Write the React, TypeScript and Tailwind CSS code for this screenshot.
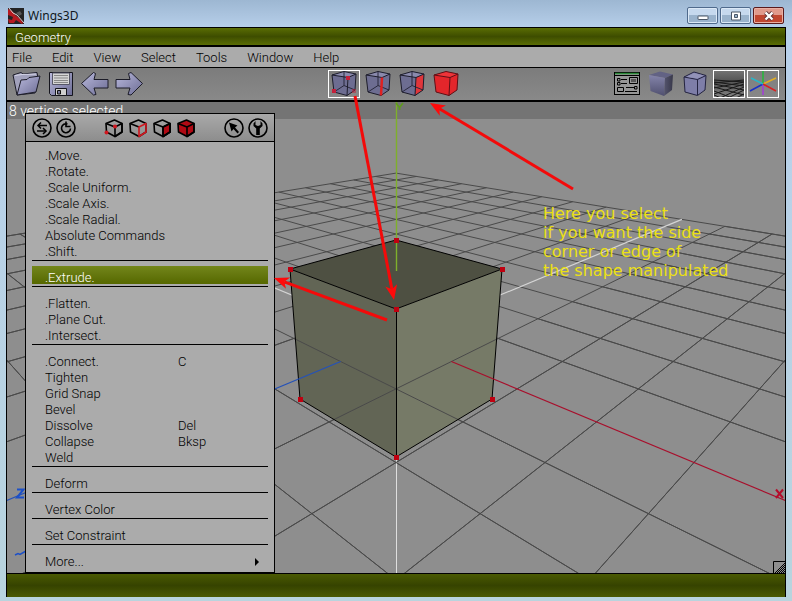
import React from "react";

type Point = [number, number];

/* Perspective projection of the ground plane. The origin sits inside the cube. */
const DEPTH = 12.717;
const project = (i: number, j: number): Point => {
  const w = DEPTH - i - j;
  return [396 + (649.4 * (i - j)) / w, 68 + 3439 / w];
};

type GridSegment = { key: string; from: Point; to: Point };

const segment = (key: string, i1: number, j1: number, i2: number, j2: number): GridSegment => ({
  key,
  from: project(i1, j1),
  to: project(i2, j2),
});

const steps = Array.from({ length: 21 }, (_, n) => n - 10);

const backGrid: GridSegment[] = steps
  .filter((n) => n !== 0)
  .flatMap((n) => {
    const end = Math.min(10, 11 - n);
    return [segment(`a${n}`, n, -10, n, end), segment(`b${n}`, -10, n, end, n)];
  });

/* The part of the ground that lies in front of the cube. */
const frontGrid: GridSegment[] = steps
  .filter((n) => n !== 0)
  .flatMap((n) => {
    const end = Math.min(10, 11 - n);
    const start = n > 1 ? -10 : n === 1 ? -1 : 1;
    return [segment(`c${n}`, n, start, n, end), segment(`d${n}`, start, n, end, n)];
  });

function Segments({ items, stroke }: { items: GridSegment[]; stroke: string }) {
  return (
    <g stroke={stroke} strokeWidth="1">
      {items.map((s) => (
        <line key={s.key} x1={s.from[0]} y1={s.from[1]} x2={s.to[0]} y2={s.to[1]} />
      ))}
    </g>
  );
}

function Axis({ from, to, stroke }: { from: Point; to: Point; stroke: string }) {
  return <line x1={from[0]} y1={from[1]} x2={to[0]} y2={to[1]} stroke={stroke} strokeWidth="1.2" />;
}

const selectedVertices: Point[] = [
  [396, 240], [502, 269], [396, 309], [290, 269], [492, 399], [396, 457], [300, 399],
];

function Scene() {
  return (
    <svg
      className="absolute inset-0 size-full"
      viewBox="7 102 778 471"
      preserveAspectRatio="xMidYMid slice"
      aria-label="3D view of a cube"
    >
      <Segments items={backGrid} stroke="#4a4a4a" />
      <Axis from={project(0, 0)} to={project(0, -10)} stroke="#d4d4d4" />
      <Axis from={project(0, 0)} to={project(-10, 0)} stroke="#d4d4d4" />
      <line x1="396.5" y1="460" x2="396.5" y2="573" stroke="#dedede" />
      <polygon points="396,240 502,269 396,309 290,269" fill="#4e5042" />
      <polygon points="290,269 396,309 396,457 300,399" fill="#626555" />
      <polygon points="502,269 396,309 396,457 492,399" fill="#767a67" />
      <Segments items={frontGrid} stroke="#4a4a4a" />
      <g fill="none" stroke="#000" strokeWidth="1">
        <path d="M396 240L502 269L396 309L290 269ZM290 269L300 399L396 457L492 399L502 269M396.5 309V457" />
      </g>
      <Axis from={project(1, 0)} to={project(8, 0)} stroke="#a80f2c" />
      <Axis from={project(0, 1)} to={project(0, 8)} stroke="#2552b8" />
      <line x1="396.5" y1="102" x2="396.5" y2="271" stroke="#7fb02c" strokeWidth="1.4" />
      {selectedVertices.map(([x, y]) => (
        <rect key={`${x}-${y}`} x={x - 2} y={y - 2} width="5" height="5" fill="#c00010" />
      ))}
      <path d="M396 103L399.500 107.500L403 103M399.500 107V110" fill="none" stroke="#5f9a20" strokeWidth="1.800" />
      <path d="M776 489.500L783 498M783 489.500L776 498" stroke="#b50d2c" strokeWidth="2" />
      <path d="M17 489.500H23.500L17 497.500H24" fill="none" stroke="#1c50c8" strokeWidth="2" />
      <path d="M15 555L18 553.500L20 554.500L26 551" fill="none" stroke="#1c50c8" strokeWidth="1.500" />
    </svg>
  );
}

function Arrow({ from, to }: { from: Point; to: Point }) {
  const angle = Math.atan2(to[1] - from[1], to[0] - from[0]);
  const at = (along: number, across: number): Point => [
    to[0] - along * Math.cos(angle) - across * Math.sin(angle),
    to[1] - along * Math.sin(angle) + across * Math.cos(angle),
  ];
  const neck = at(11, 0);
  return (
    <g>
      <line x1={from[0]} y1={from[1]} x2={neck[0]} y2={neck[1]} stroke="#f40a0a" strokeWidth="3" />
      <polygon points={[to, at(15, 6), neck, at(15, -6)].map((p) => p.join(",")).join(" ")} fill="#ff0a0a" />
    </g>
  );
}

function Annotations() {
  return (
    <>
      <svg
        className="pointer-events-none absolute inset-0 z-20 size-full overflow-visible"
        viewBox="7 102 778 471"
        preserveAspectRatio="xMidYMid slice"
        aria-hidden="true"
      >
        <Arrow from={[355, 96]} to={[394, 300]} />
        <Arrow from={[387, 320]} to={[274, 278]} />
        <Arrow from={[573, 189]} to={[430, 103]} />
      </svg>
      <p className="absolute top-[102px] left-[536px] z-20 font-['DejaVu_Sans',sans-serif] text-base leading-[19px] font-normal whitespace-nowrap text-[#ece014]">
        Here you select
        <br />
        if you want the side
        <br />
        corner or edge of
        <br />
        the shape manipulated
      </p>
    </>
  );
}

/* ---------- toolbar icons ---------- */

function Defs() {
  return (
    <svg className="absolute size-0" aria-hidden="true">
      <defs>
        <linearGradient id="lilac" x1="0" y1="0" x2="1" y2="1">
          <stop offset="0" stopColor="#b9b9dc" />
          <stop offset="1" stopColor="#6c6c94" />
        </linearGradient>
        <linearGradient id="lilacDown" x1="0" y1="0" x2="0" y2="1">
          <stop offset="0" stopColor="#8484aa" />
          <stop offset="1" stopColor="#50506f" />
        </linearGradient>
        <linearGradient id="dark" x1="0" y1="0" x2="1" y2="0">
          <stop offset="0" stopColor="#55556f" />
          <stop offset="1" stopColor="#38384a" />
        </linearGradient>
        <linearGradient id="haze" x1="0" y1="0" x2="0" y2="1">
          <stop offset="0" stopColor="#787878" />
          <stop offset="0.4" stopColor="#545454" />
          <stop offset="1" stopColor="#868686" />
        </linearGradient>
      </defs>
    </svg>
  );
}

function Icon({ children }: { children: React.ReactNode }) {
  return (
    <svg className="size-[30px] shrink-0" viewBox="0 0 30 30" fill="none" aria-hidden="true">
      {children}
    </svg>
  );
}

const FolderIcon = () => (
  <Icon>
    <path d="M1 6L9 3.500L11 5L25 3.500L26 9L23 24L5 26Z" fill="#a2a2bc" stroke="#1c1c28" />
    <path d="M3 6.500L10 5.500L24 5" stroke="#d6d6e8" />
    <path d="M5 26L9 11L15 10.500L17 8.500L28 7L24 23Z" fill="url(#lilac)" stroke="#1c1c28" />
  </Icon>
);

const SaveIcon = () => (
  <Icon>
    <path d="M3.500 3.500H26.500V26.500H5.500L3.500 24.500Z" fill="url(#lilac)" stroke="#15151d" />
    <path d="M6.500 4H23.500V15.500H6.500Z" fill="#d4d4d4" stroke="#555566" />
    <path d="M8 6.500H22M8 9H22M8 11.500H22M8 13.500H22" stroke="#878787" />
    <path d="M9.500 19.500H20.500V26.500H9.500Z" fill="#cfcfcf" stroke="#15151d" />
    <path d="M11.500 21.500H14.500V25H11.500Z" fill="#777799" stroke="#111" />
  </Icon>
);

const LeftArrowIcon = () => (
  <Icon>
    <path d="M1.500 14.500L13.500 3.500L15.500 4.500L14 10.500H28V19H14L16 25.500L13.500 26Z" fill="url(#lilac)" stroke="#1c1c28" />
  </Icon>
);

const RightArrowIcon = () => (
  <Icon>
    <path d="M28.500 14.500L17 3.500L14.500 4.500L16 10.500H2V19H16L14 25.500L17 26Z" fill="url(#lilac)" stroke="#1c1c28" />
  </Icon>
);

type CubeMode = "vertex" | "edge" | "face" | "body";

function SelectCubeIcon({ mode }: { mode: CubeMode }) {
  const body = mode === "body";
  return (
    <Icon>
      <path d="M3 6L15 2.500L27 5L26 21L18 26.500L5 23Z" fill={body ? "#e3262b" : "#6d6d91"} />
      <path d="M3 6L19 8.500L27 5L15 2.500Z" fill={body ? "#ee3439" : "#8a8aad"} />
      {mode === "face" && <path d="M19 8.500L27 5L26 21L18 26.500Z" fill="#e0353a" />}
      {!body && <path d="M15 2.500V16.500M15 16.500L5 23M15 16.500L26 21" stroke="#29293c" />}
      <path d="M3 6L15 2.500L27 5L26 21L18 26.500L5 23ZM3 6L19 8.500L27 5M19 8.500L18 26.500" stroke={body ? "#5d1016" : "#1d1d2b"} />
      {mode === "edge" && <path d="M19 8.500L18 26.500" stroke="#e02020" strokeWidth="2.500" />}
      {mode === "vertex" && (
        <g fill="#c4203a">
          <rect x="3" y="20" width="4" height="4" />
          <rect x="17" y="7" width="4" height="4" />
          <rect x="23" y="20" width="4" height="4" opacity="0.500" />
        </g>
      )}
    </Icon>
  );
}

const FormIcon = () => (
  <Icon>
    <rect x="2.500" y="3.500" width="25" height="22" fill="#969696" stroke="#000" />
    <path d="M3 4.500H27" stroke="#2c8a38" strokeWidth="1.500" />
    <path d="M3 6.500H27" stroke="#000" />
    <path d="M5.500 9.500H8V12H5.500ZM5.500 13.500H8V16H5.500ZM5.500 18.500H11.500V22.500H5.500ZM17.500 8.500H25.500V14.500H17.500ZM22.500 17.500H25V20H22.500Z" stroke="#000" />
    <path d="M19 10H24V13H19Z" fill="#555" />
    <path d="M9 10.500H15M9 14.500H15M14 18.500H22M13 22.500H25" stroke="#000" />
  </Icon>
);

const SmoothCubeIcon = () => (
  <Icon>
    <path d="M3 6L14 2.500L27 5.500L19 9Z" fill="#626284" />
    <path d="M3 6L19 9L18 27L4.500 22Z" fill="url(#lilacDown)" />
    <path d="M19 9L27 5.500L26 21L18 27Z" fill="url(#dark)" />
  </Icon>
);

const EdgedCubeIcon = () => (
  <Icon>
    <path d="M4 8L14 3L26 6.500L25 21L17.500 26.500L5 23Z" fill="#7e7ea8" stroke="#232340" />
    <path d="M4 8L17.500 10.500L26 6.500M17.500 10.500V26" stroke="#232340" />
    <path d="M6.500 7.800L14 4L24 6.500L17 9.500Z" fill="#9292b8" />
  </Icon>
);

/* A miniature ground plane: two families of lines crossing into diamonds. */
const GroundIcon = () => (
  <Icon>
    <rect width="30" height="30" fill="url(#haze)" />
    <g stroke="#1a1a1a" strokeWidth="1">
      <path d="M0 11L30 13M0 13L30 17M0 15L30 21M0 18L30 26M0 22L18 29M0 26L7 29" />
      <path d="M30 11L0 14M30 13L0 19M30 15L0 25M30 18L6 29M30 21L14 29M30 25L22 29" />
    </g>
  </Icon>
);

const AxesIcon = () => (
  <Icon>
    <g strokeWidth="1.500">
      <path d="M15 15V2" stroke="#24b83a" />
      <path d="M15 15V26" stroke="#a53adb" />
      <path d="M15 15L28 9" stroke="#e2ad20" />
      <path d="M15 15L28 22" stroke="#d92222" />
      <path d="M15 15L2 22" stroke="#1a30c8" />
      <path d="M15 15L3 9" stroke="#25b6c8" />
    </g>
  </Icon>
);

function Tool({ label, active, children }: { label: string; active?: boolean; children: React.ReactNode }) {
  return (
    <button
      type="button"
      aria-label={label}
      aria-pressed={active}
      className={`flex h-7 w-8 items-center justify-center overflow-hidden border ${active ? "border-white" : "border-transparent"}`}
    >
      {children}
    </button>
  );
}

/* ---------- pop-up header icons ---------- */

function Round({ label, children }: { label: string; children: React.ReactNode }) {
  return (
    <button type="button" aria-label={label} className="size-6">
      <svg className="size-6" viewBox="0 0 24 24" fill="none" stroke="#000" strokeWidth="1.800" aria-hidden="true">
        <circle cx="12" cy="12" r="9" strokeWidth="1.600" />
        {children}
      </svg>
    </button>
  );
}

function MiniCube({ mode }: { mode: CubeMode }) {
  const red = "#b00a14";
  const edge = mode === "edge" ? "#d01820" : "#000";
  return (
    <button type="button" aria-label={`Select ${mode}`} className="size-6">
      <svg className="size-6" viewBox="0 0 24 24" fill="none" stroke="#000" strokeWidth="1.600" strokeLinejoin="round" aria-hidden="true">
        <path d="M4 7.500L12.500 4L20 7.500V16L13 20.500L4.500 16Z" fill={mode === "body" ? red : "none"} />
        {mode === "face" && <path d="M13 11L20 7.500V16L13 20.500Z" fill={red} />}
        <path d="M4 7.500L13 11" />
        <path d="M13 11L20 7.500V16L13 20.500Z" stroke={edge} />
        {mode === "vertex" && (
          <g fill="#d01820" stroke="none">
            <circle cx="4.500" cy="16.500" r="2" />
            <circle cx="13" cy="10.500" r="2" />
          </g>
        )}
      </svg>
    </button>
  );
}

/* ---------- pop-up menu ---------- */

type Entry = { label: string; shortcut?: string; selected?: boolean; submenu?: boolean };

const groups: Entry[][] = [
  [
    { label: ".Move." },
    { label: ".Rotate." },
    { label: ".Scale Uniform." },
    { label: ".Scale Axis." },
    { label: ".Scale Radial." },
    { label: "Absolute Commands" },
    { label: ".Shift." },
  ],
  [{ label: ".Extrude.", selected: true }],
  [{ label: ".Flatten." }, { label: ".Plane Cut." }, { label: ".Intersect." }],
  [
    { label: ".Connect.", shortcut: "C" },
    { label: "Tighten" },
    { label: "Grid Snap" },
    { label: "Bevel" },
    { label: "Dissolve", shortcut: "Del" },
    { label: "Collapse", shortcut: "Bksp" },
    { label: "Weld" },
  ],
  [{ label: "Deform" }],
  [{ label: "Vertex Color" }],
  [{ label: "Set Constraint" }],
  [{ label: "More...", submenu: true }],
];

function MenuRow({ label, shortcut, selected, submenu }: Entry) {
  return (
    <button
      type="button"
      role="menuitem"
      className={`grid w-full grid-cols-[133px_1fr_auto] items-center pr-2 pl-[13px] text-left ${
        selected ? "-mt-0.5 h-[18px] bg-linear-to-b from-[#73861a] to-[#566800] pt-1 text-white" : "h-4 pt-0.5"
      }`}
    >
      <span>{label}</span>
      <span>{shortcut}</span>
      {submenu && (
        <svg className="h-2 w-1.5" viewBox="0 0 6 8" aria-hidden="true">
          <path d="M1 0L5 4L1 8Z" fill="#000" />
        </svg>
      )}
    </button>
  );
}

function PopupMenu() {
  return (
    <div className="absolute top-[11px] left-[18px] z-10 w-[250px] border border-black bg-[#ababab]">
      <div className="flex h-7 items-center justify-between border-b border-black bg-linear-to-b from-[#a9a9a9] to-[#8d8d8d] px-1">
        <div className="flex">
          <Round label="Repeat arguments">
            <path d="M17 9.500H9M11 6.500L8 9.500L11 12.500M7 15H14.500M13 12L16 15L13 18" strokeWidth="1.500" />
          </Round>
          <Round label="Repeat command">
            <path d="M13.500 8A4.500 4.500 0 1 0 16.500 12.500M12 5.500V10.500H16.500" strokeWidth="1.600" />
          </Round>
        </div>
        <div className="flex">
          <MiniCube mode="vertex" />
          <MiniCube mode="edge" />
          <MiniCube mode="face" />
          <MiniCube mode="body" />
        </div>
        <div className="flex">
          <Round label="Pick">
            <path d="M7 6.500L15.500 9.500L13 11.500L17 16L15.500 17.500L11.500 13L9.500 15.500Z" fill="#000" stroke="none" />
          </Round>
          <Round label="Options">
            <path d="M9.500 5L7.500 7.500V10L10.200 12.500V19H13.800V12.500L16.500 10V7.500L14.500 5V9L12 10L9.500 9Z" fill="#000" stroke="none" />
          </Round>
        </div>
      </div>
      <div role="menu" className="px-1.5 py-1">
        {groups.map((entries, index) => (
          <React.Fragment key={entries[0].label}>
            {index > 0 && <div role="separator" className="mt-0.5 mb-[7px] h-px bg-black" />}
            {entries.map((entry) => (
              <MenuRow key={entry.label} {...entry} />
            ))}
          </React.Fragment>
        ))}
      </div>
    </div>
  );
}

/* ---------- window ---------- */

function TitleBar() {
  const button =
    "flex h-[17px] w-[31px] items-center justify-center rounded-[2px] border border-[#4f6a8c] bg-linear-to-b from-[#c6d9ee] from-50% to-[#9ab3cc] to-50% shadow-[inset_0_0_0_1px_#dbe8f6]";
  return (
    <header className="flex h-[27px] items-center px-2 pt-1">
      <svg className="size-4" viewBox="0 0 16 16" aria-hidden="true">
        <rect width="16" height="16" fill="#242424" />
        <path d="M0 1L4 3L7 7L11 10L15 15L14 16L8 12L6 15L1 15L0 11L4 12L5 9L0 7Z" fill="#b51a20" />
        <path d="M1 0L5 5L9 7L16 15" fill="none" stroke="#e6d0d0" />
        <path d="M8 5L12 3L14 6L11 8Z" fill="#565656" />
      </svg>
      <h1 className="ml-1 flex-1 font-['Noto_Sans',sans-serif] text-xs text-[#101820]">Wings3D</h1>
      <div className="flex gap-0.5">
        <button type="button" aria-label="Minimize" className={button}>
          <svg className="h-3 w-4" viewBox="0 0 16 12" aria-hidden="true">
            <rect x="3" y="6" width="10" height="3.500" rx="0.500" fill="#fff" stroke="#4b5767" />
          </svg>
        </button>
        <button type="button" aria-label="Maximize" className={button}>
          <svg className="h-3 w-4" viewBox="0 0 16 12" aria-hidden="true">
            <path fillRule="evenodd" d="M3.500 2H12.500V10H3.500ZM6.500 4.500V7.500H9.500V4.500Z" fill="#fff" stroke="#4b5767" />
          </svg>
        </button>
        <button
          type="button"
          aria-label="Close"
          className="flex h-[17px] w-[31px] items-center justify-center rounded-[2px] border border-[#5a1a1c] bg-linear-to-b from-[#e09a8c] from-50% to-[#c04630] to-50% shadow-[inset_0_0_0_1px_#eab0a4]"
        >
          <svg className="h-3 w-4" viewBox="0 0 16 12" aria-hidden="true">
            <path d="M4.500 2.500L11.500 9.500M11.500 2.500L4.500 9.500" stroke="#5c3438" strokeWidth="4" />
            <path d="M4.500 2.500L11.500 9.500M11.500 2.500L4.500 9.500" stroke="#fff" strokeWidth="2.400" />
          </svg>
        </button>
      </div>
    </header>
  );
}

const menus = ["File", "Edit", "View", "Select", "Tools", "Window", "Help"];

export default function App() {
  return (
    <div className="flex h-screen min-h-[601px] flex-col bg-[#b9d3ec] bg-linear-to-b from-[#9db7d2] via-[#b9d1ec] via-5% to-[#b8d4de]">
      <Defs />
      <TitleBar />
      <main className="mr-1.5 mb-1 ml-1.5 flex flex-1 flex-col border-x border-t border-black font-['Roboto',sans-serif] text-[13px] leading-4 font-light text-black">
        <h2 className="flex h-[19px] items-center border-b-2 border-black bg-linear-to-b from-[#5a6d04] via-[#3e4d00] to-[#5a6d04] px-2 pt-0.5 text-white">
          Geometry
        </h2>
        <nav className="flex h-[21px] items-center gap-5 border-b border-black bg-[#ababab] px-[5px] pt-0.5">
          {menus.map((name) => (
            <button key={name} type="button">
              {name}
            </button>
          ))}
        </nav>
        <div className="flex h-[34px] items-center justify-between border-b-2 border-black bg-linear-to-b from-[#7c7c7c] to-[#898989] px-1">
          <div className="flex flex-1 gap-0.5">
            <Tool label="Open"><FolderIcon /></Tool>
            <Tool label="Save"><SaveIcon /></Tool>
            <Tool label="Undo"><LeftArrowIcon /></Tool>
            <Tool label="Redo"><RightArrowIcon /></Tool>
          </div>
          <div className="flex gap-0.5">
            <Tool label="Vertex selection" active><SelectCubeIcon mode="vertex" /></Tool>
            <Tool label="Edge selection"><SelectCubeIcon mode="edge" /></Tool>
            <Tool label="Face selection"><SelectCubeIcon mode="face" /></Tool>
            <Tool label="Body selection"><SelectCubeIcon mode="body" /></Tool>
          </div>
          <div className="flex flex-1 justify-end gap-0.5 pr-0.5">
            <Tool label="Preferences"><FormIcon /></Tool>
            <Tool label="Smooth shading"><SmoothCubeIcon /></Tool>
            <Tool label="Orthographic view"><EdgedCubeIcon /></Tool>
            <Tool label="Ground plane" active><GroundIcon /></Tool>
            <Tool label="Axes" active><AxesIcon /></Tool>
          </div>
        </div>
        <section className="relative flex-1 border-b border-black bg-[#8e8e8e]">
          <p className="h-[17px] bg-[#747474] px-0.5 text-sm leading-[18px] text-white">8 vertices selected</p>
          <Scene />
          <PopupMenu />
          <Annotations />
          <svg className="absolute right-0 bottom-0 size-3" viewBox="0 0 12 12" aria-hidden="true">
            <path d="M0.500 12V0.500H12" fill="none" stroke="#000" />
            <path d="M2 12L12 2M4 12L12 4M6 12L12 6M8 12L12 8M10 12L12 10" stroke="#000" />
          </svg>
        </section>
        <footer className="h-[23px] bg-linear-to-b from-[#4a5a02] via-[#364300] to-[#4a5a02]" />
      </main>
    </div>
  );
}
